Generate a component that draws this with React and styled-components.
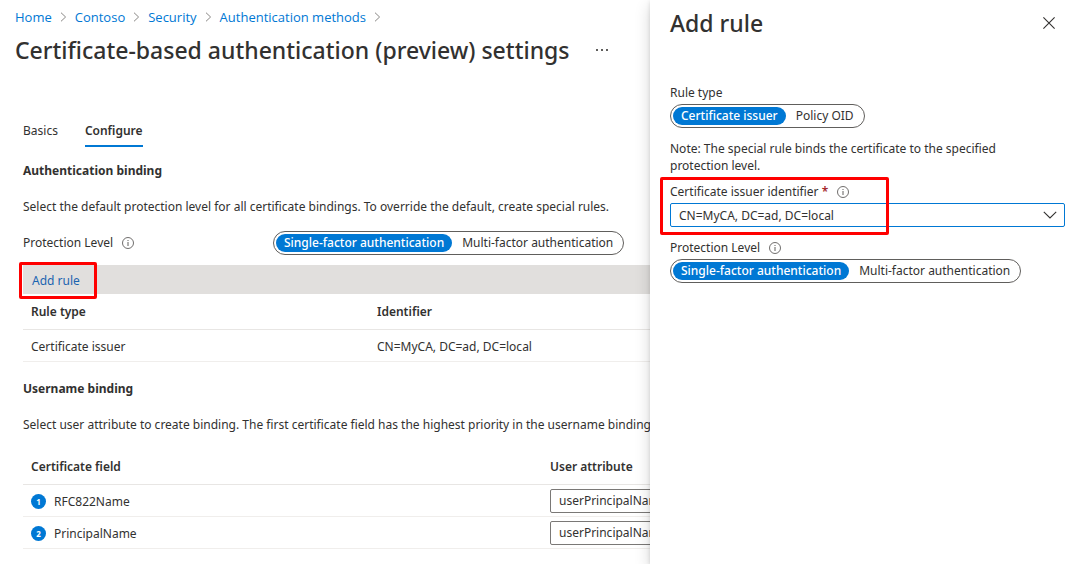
import React, { useId, useState } from "react";
import styled, { createGlobalStyle } from "styled-components";

const GlobalStyle = createGlobalStyle`
  *, *::before, *::after { box-sizing: border-box; }
  body {
    margin: 0;
    background: #fff;
    color: #323130;
    font-family: "Noto Sans", "Open Sans", sans-serif;
    font-size: 12px;
    line-height: 18px;
  }
  button, select, input { font: inherit; color: inherit; }
`;

const Page = styled.div`
  position: relative;
  min-height: 100vh;
  overflow: hidden;
`;

const Main = styled.main`
  padding: 8px 12px 15px 15px;
`;

const Breadcrumb = styled.nav`
  display: flex;
  align-items: center;
  gap: 8px;
  font-family: "Open Sans", sans-serif;
  font-size: 13px;
`;

const Crumb = styled.a`
  color: #0078d4;
  text-decoration: none;
`;

const TitleRow = styled.div`
  display: flex;
  align-items: center;
  gap: 24px;
  margin-top: 8px;
`;

const Title = styled.h1`
  margin: 0;
  font-size: 23px;
  font-weight: 500;
  line-height: 32px;
  white-space: nowrap;
`;

const IconButton = styled.button`
  display: flex;
  align-items: center;
  justify-content: center;
  width: 16px;
  height: 16px;
  padding: 0;
  border: 0;
  background: none;
`;

const Content = styled.div`
  padding-left: 8px;
`;

const Tabs = styled.div`
  display: flex;
  gap: 27px;
  margin-top: 55px;
`;

const Tab = styled.button`
  height: 26px;
  padding: 0 0 5px;
  border: 0;
  border-bottom: 2px solid ${(p) => (p.$active ? "#0078d4" : "transparent")};
  background: none;
  font-weight: ${(p) => (p.$active ? 600 : 400)};
  line-height: 18px;
`;

const SectionTitle = styled.h2`
  margin: 0;
  padding: ${(p) => (p.$first ? "15px" : "18px")} 0 18px;
  font-size: 12px;
  font-weight: 700;
  line-height: 18px;
`;

const Description = styled.p`
  margin: 0;
  white-space: nowrap;
`;

const SettingRow = styled.div`
  display: grid;
  grid-template-columns: 250px 1fr;
  align-items: center;
  padding: 15px 0 10px;
`;

const LabelRow = styled.div`
  display: flex;
  align-items: center;
  gap: 9px;
`;

const Required = styled.span`
  color: #a4262c;
  font-weight: 600;
`;

const ToggleGroup = styled.div`
  display: inline-flex;
  justify-self: start;
  align-self: flex-start;
  gap: 2px;
  height: 24px;
  padding: 2px;
  border: 1px solid #605e5c;
  border-radius: 12px;
  background: #fff;
`;

const ToggleOption = styled.label`
  padding: 0 8px;
  border-radius: 9px;
  line-height: 18px;
  white-space: nowrap;
  cursor: pointer;

  &:has(input:checked) {
    background: #0078d4;
    color: #fff;
    font-weight: 500;
  }
`;

const ToggleInput = styled.input`
  appearance: none;
  float: left;
  width: 0;
  height: 0;
  margin: 0;
`;

const Toolbar = styled.div`
  position: relative;
  display: flex;
  align-items: center;
  height: 29px;
  padding: 2px 9px 0;
  background: #e1dfdd;
`;

const ToolbarButton = styled.button`
  padding: 0;
  border: 0;
  background: none;
  color: #1b64b0;
  line-height: 18px;
`;

const Highlight = styled.span`
  position: absolute;
  top: ${(p) => p.$top}px;
  left: ${(p) => p.$left}px;
  width: ${(p) => p.$width}px;
  height: ${(p) => p.$height}px;
  border: 3px solid #ff0000;
  border-radius: 2px;
  pointer-events: none;
`;

const Table = styled.table`
  width: 100%;
  table-layout: fixed;
  border-collapse: separate;
  border-spacing: 0;
  margin-top: ${(p) => (p.$spaced ? "15px" : "0")};
`;

const HeadCell = styled.th`
  width: ${(p) => p.$width || "auto"};
  height: 36px;
  padding: 0 8px;
  border-bottom: 1px solid #e8e6e4;
  font-weight: 600;
  text-align: left;
`;

const Cell = styled.td`
  height: 32px;
  padding: ${(p) => (p.$control ? "0" : "2px")} 8px 0;
  border-bottom: 1px solid #f0eeec;
`;

const FieldName = styled.div`
  display: flex;
  align-items: center;
  gap: 8px;
`;

const Badge = styled.span`
  width: 15px;
  height: 15px;
  border-radius: 50%;
  background: #0078d4;
  color: #fff;
  font-size: 8px;
  font-weight: 700;
  line-height: 15px;
  text-align: center;
`;

const SelectWrap = styled.div`
  display: grid;
  align-items: center;

  > * { grid-area: 1 / 1; }
  > svg {
    justify-self: end;
    margin-right: 8px;
    pointer-events: none;
  }
`;

const SelectBox = styled.select`
  appearance: none;
  width: 100%;
  height: 24px;
  padding: 1px 28px 0 8px;
  border: 1px solid ${(p) => (p.$focused ? "#0078d4" : "#7a7876")};
  border-radius: 2px;
  background: #fff;
  outline: none;
`;

const Drawer = styled.aside`
  position: absolute;
  top: 0;
  right: 0;
  bottom: 0;
  width: 423px;
  max-width: 100%;
  padding: 7px 8px 16px 20px;
  background: #fff;
  box-shadow: 0 6px 15px rgba(0, 0, 0, 0.16), 0 1px 4px rgba(0, 0, 0, 0.12);
`;

const DrawerHeader = styled.header`
  display: flex;
  align-items: center;
  justify-content: space-between;
  padding-right: 8px;
  margin-bottom: 45px;
`;

const Field = styled.div`
  position: relative;
  display: flex;
  flex-direction: column;
  gap: 2px;
  margin-bottom: 12px;
`;

const Note = styled.p`
  max-width: 350px;
  margin: 0 0 9px;
  line-height: 17px;
`;

function InfoIcon() {
  return (
    <svg width="12" height="12" viewBox="0 0 12 12" fill="none" stroke="#605e5c" aria-hidden="true">
      <circle cx="6" cy="6" r="5.5" strokeWidth="0.9" />
      <path d="M6 5v4M6 3v1" strokeWidth="1" />
    </svg>
  );
}

function CrumbArrow() {
  return (
    <svg width="7" height="10" viewBox="0 0 7 10" fill="none" stroke="#8a8886" aria-hidden="true">
      <path d="M1 .7 5.6 5 1 9.3" />
    </svg>
  );
}

function Chevron() {
  return (
    <svg width="14" height="8" viewBox="0 0 14 8" fill="none" stroke="#323130" aria-hidden="true">
      <path d="M.8.8 7 7 13.2.8" strokeWidth="1.1" />
    </svg>
  );
}

function Toggle({ label, options }) {
  const name = useId();
  const [value, setValue] = useState(options[0]);
  return (
    <ToggleGroup role="radiogroup" aria-label={label}>
      {options.map((option) => (
        <ToggleOption key={option}>
          <ToggleInput
            type="radio"
            name={name}
            checked={value === option}
            onChange={() => setValue(option)}
          />
          {option}
        </ToggleOption>
      ))}
    </ToggleGroup>
  );
}

function Dropdown({ id, label, value, focused }) {
  return (
    <SelectWrap>
      <SelectBox id={id} aria-label={label} $focused={focused} defaultValue={value}>
        <option>{value}</option>
      </SelectBox>
      <Chevron />
    </SelectWrap>
  );
}

const crumbs = ["Home", "Contoso", "Security", "Authentication methods"];
const levels = ["Single-factor authentication", "Multi-factor authentication"];
const bindings = ["RFC822Name", "PrincipalName"];

export default function App() {
  return (
    <Page>
      <GlobalStyle />
      <Main>
        <Breadcrumb aria-label="Breadcrumb">
          {crumbs.map((crumb) => (
            <React.Fragment key={crumb}>
              <Crumb href="#">{crumb}</Crumb>
              <CrumbArrow />
            </React.Fragment>
          ))}
        </Breadcrumb>
        <TitleRow>
          <Title>Certificate-based authentication (preview) settings</Title>
          <IconButton aria-label="More">
            <svg width="12" height="2" viewBox="0 0 12 2" fill="#605e5c">
              <path d="M0 0h2v2H0zM5 0h2v2H5zM10 0h2v2h-2z" />
            </svg>
          </IconButton>
        </TitleRow>

        <Content>
          <Tabs role="tablist">
            <Tab role="tab" aria-selected="false">Basics</Tab>
            <Tab role="tab" aria-selected="true" $active>Configure</Tab>
          </Tabs>

          <SectionTitle $first>Authentication binding</SectionTitle>
          <Description>
            Select the default protection level for all certificate bindings. To override the default, create special rules.
          </Description>
          <SettingRow>
            <LabelRow>
              <span>Protection Level</span>
              <InfoIcon />
            </LabelRow>
            <Toggle label="Default protection level" options={levels} />
          </SettingRow>

          <Toolbar>
            <ToolbarButton>Add rule</ToolbarButton>
            <Highlight $top={-3} $left={-4} $width={78} $height={37} />
          </Toolbar>
          <Table>
            <thead>
              <tr>
                <HeadCell $width="33.3333%">Rule type</HeadCell>
                <HeadCell>Identifier</HeadCell>
              </tr>
            </thead>
            <tbody>
              <tr>
                <Cell>Certificate issuer</Cell>
                <Cell>CN=MyCA, DC=ad, DC=local</Cell>
              </tr>
            </tbody>
          </Table>

          <SectionTitle>Username binding</SectionTitle>
          <Description>
            Select user attribute to create binding. The first certificate field has the highest priority in the username binding.
          </Description>
          <Table $spaced>
            <thead>
              <tr>
                <HeadCell $width="50%">Certificate field</HeadCell>
                <HeadCell>User attribute</HeadCell>
              </tr>
            </thead>
            <tbody>
              {bindings.map((field, index) => (
                <tr key={field}>
                  <Cell>
                    <FieldName>
                      <Badge>{index + 1}</Badge>
                      {field}
                    </FieldName>
                  </Cell>
                  <Cell $control>
                    <Dropdown label={`User attribute for ${field}`} value="userPrincipalName" />
                  </Cell>
                </tr>
              ))}
            </tbody>
          </Table>
        </Content>
      </Main>

      <Drawer aria-label="Add rule">
        <DrawerHeader>
          <Title as="h2">Add rule</Title>
          <IconButton aria-label="Close">
            <svg width="12" height="12" viewBox="0 0 12 12" stroke="#323130" strokeWidth="1.1">
              <path d="M.4.4l11.2 11.2M11.6.4.4 11.6" />
            </svg>
          </IconButton>
        </DrawerHeader>
        <Field>
          <span>Rule type</span>
          <Toggle label="Rule type" options={["Certificate issuer", "Policy OID"]} />
        </Field>
        <Note>Note: The special rule binds the certificate to the specified protection level.</Note>
        <Field>
          <LabelRow>
            <label htmlFor="issuer">
              Certificate issuer identifier <Required>*</Required>
            </label>
            <InfoIcon />
          </LabelRow>
          <Dropdown id="issuer" value="CN=MyCA, DC=ad, DC=local" focused />
          <Highlight $top={-6} $left={-10} $width={229} $height={58} />
        </Field>
        <Field>
          <LabelRow>
            <span>Protection Level</span>
            <InfoIcon />
          </LabelRow>
          <Toggle label="Rule protection level" options={levels} />
        </Field>
      </Drawer>
    </Page>
  );
}
